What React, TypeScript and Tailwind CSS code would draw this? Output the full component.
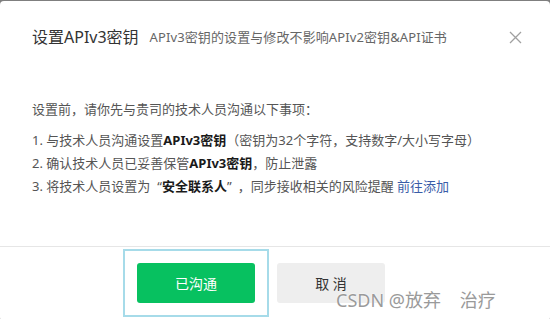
import React from 'react';

const font = '"Noto Sans", "Noto Sans CJK SC", sans-serif';

export default function App() {
  return (
    <div className="w-[550px] h-[319px] bg-[#7f7f7f] pt-px overflow-hidden" style={{ fontFamily: font }}>
      <div className="relative h-[320px] bg-white rounded-[4px] flex flex-col">
        {/* Header */}
        <div className="flex items-center pl-8 pr-[28px] pt-[24px] h-[48px]">
          <h3 className="text-[16px] leading-[22px] text-[#333] font-normal">设置APIv3密钥</h3>
          <span className="ml-[11px] text-[13px] leading-[22px] text-[#666] tracking-[0.1px]">
            APIv3密钥的设置与修改不影响APIv2密钥&amp;API证书
          </span>
          <button className="ml-auto text-[#a0a0a0]" aria-label="close">
            <svg width="13" height="13" viewBox="0 0 13 13" fill="none" stroke="currentColor" strokeWidth="1.3">
              <path d="M1 1L12 12M12 1L1 12" />
            </svg>
          </button>
        </div>

        {/* Body */}
        <div className="pl-8 pt-[49px] text-[13px] text-[#555]">
          <p className="leading-[22px]">设置前，请你先与贵司的技术人员沟通以下事项：</p>
          <ol className="mt-[9px] leading-[23px]">
            <li>
              1. 与技术人员沟通设置<b className="text-[#1a1a1a]">APIv3密钥</b>（密钥为32个字符，支持数字/大小写字母）
            </li>
            <li>
              2. 确认技术人员已妥善保管<b className="text-[#1a1a1a]">APIv3密钥</b>，防止泄露
            </li>
            <li>
              3. 将技术人员设置为<span className="ml-[7px]">“</span>
              <b className="text-[#1a1a1a]">安全联系人</b>
              <span className="mr-[6px]">”</span>，同步接收相关的风险提醒{' '}
              <a className="text-[#3a5ca8]">前往添加</a>
            </li>
          </ol>
        </div>

        {/* Footer */}
        <div className="mt-[48px] border-t border-[#e6e6e6] pt-[2px] pl-[123px] flex items-center">
          <span className="border-2 border-[#a6dbe9] p-3">
            <button className="w-[118px] h-[40px] rounded-[3px] bg-[#07c160] text-white text-[14px] block">
              已沟通
            </button>
          </span>
          <button className="ml-[8px] w-[108px] h-[40px] rounded-[3px] bg-[#eeeeee] text-[#333] text-[14px]">
            取 消
          </button>
        </div>

        {/* Watermark */}
        <div className="absolute left-[336px] top-[286px] text-[18px] leading-[26px] text-[#9a9a9a] [text-shadow:0_0_1px_#fff,0_0_2px_#fff] whitespace-pre">
          CSDN @放弃    治疗
        </div>
      </div>
    </div>
  );
}
